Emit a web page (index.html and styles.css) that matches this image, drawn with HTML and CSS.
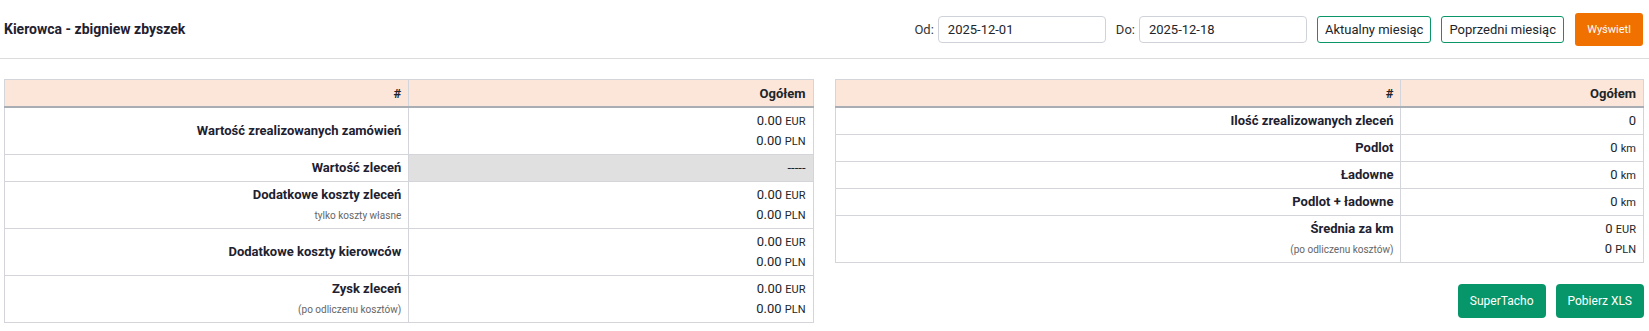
FILE: index.html
```html
<!DOCTYPE html>
<html>
<head>
    <title>Kierowca - raport</title>
    <link rel="stylesheet" href="styles.css">
</head>
<body>
    <div class="topbar">
        <h1 class="title">Kierowca - zbigniew zbyszek</h1>
        <div class="filters">
            <label class="field">Od: <input type="text" class="date" value="2025-12-01"></label>
            <label class="field">Do: <input type="text" class="date" value="2025-12-18"></label>
            <button class="btn btn-outline">Aktualny miesiąc</button>
            <button class="btn btn-outline">Poprzedni miesiąc</button>
            <button class="btn btn-orange">Wyświetl</button>
        </div>
    </div>

    <div class="content">
        <div class="col">
            <table class="stats">
                <thead>
                    <tr><th class="half">#</th><th>Ogółem</th></tr>
                </thead>
                <tbody>
                    <tr>
                        <td class="label">Wartość zrealizowanych zamówień</td>
                        <td>0.00 <small>EUR</small><br>0.00 <small>PLN</small></td>
                    </tr>
                    <tr>
                        <td class="label">Wartość zleceń</td>
                        <td class="empty">-----</td>
                    </tr>
                    <tr>
                        <td class="label">Dodatkowe koszty zleceń<br><span class="note">tylko koszty własne</span></td>
                        <td>0.00 <small>EUR</small><br>0.00 <small>PLN</small></td>
                    </tr>
                    <tr>
                        <td class="label">Dodatkowe koszty kierowców</td>
                        <td>0.00 <small>EUR</small><br>0.00 <small>PLN</small></td>
                    </tr>
                    <tr>
                        <td class="label">Zysk zleceń<br><span class="note">(po odliczenu kosztów)</span></td>
                        <td>0.00 <small>EUR</small><br>0.00 <small>PLN</small></td>
                    </tr>
                </tbody>
            </table>
        </div>

        <div class="col">
            <table class="stats">
                <thead>
                    <tr><th class="wide">#</th><th>Ogółem</th></tr>
                </thead>
                <tbody>
                    <tr>
                        <td class="label">Ilość zrealizowanych zleceń</td>
                        <td>0</td>
                    </tr>
                    <tr>
                        <td class="label">Podlot</td>
                        <td>0 <small>km</small></td>
                    </tr>
                    <tr>
                        <td class="label">Ładowne</td>
                        <td>0 <small>km</small></td>
                    </tr>
                    <tr>
                        <td class="label">Podlot + ładowne</td>
                        <td>0 <small>km</small></td>
                    </tr>
                    <tr>
                        <td class="label">Średnia za km<br><span class="note">(po odliczenu kosztów)</span></td>
                        <td>0 <small>EUR</small><br>0 <small>PLN</small></td>
                    </tr>
                </tbody>
            </table>

            <div class="actions">
                <button class="btn btn-green">SuperTacho</button>
                <button class="btn btn-green">Pobierz XLS</button>
            </div>
        </div>
    </div>
</body>
</html>
```

FILE: styles.css
```css
/* Raport kierowcy */
body {
    margin: 0;
    font-family: Roboto, "Liberation Sans", sans-serif;
    font-size: 13px;
    color: #212529;
    background: #fff;
}

.topbar {
    display: flex;
    justify-content: space-between;
    align-items: center;
    height: 58px;
    padding: 0 6px 0 4px;
    border-bottom: 1px solid #dcdcdc;
}

.title {
    margin: 0;
    font-size: 14px;
    font-weight: 700;
    color: #1e2130;
}

.filters {
    display: flex;
    align-items: center;
    gap: 10px;
}

.field {
    display: flex;
    align-items: center;
    gap: 4px;
    font-size: 13px;
    color: #333;
}

.date {
    width: 168px;
    height: 27px;
    box-sizing: border-box;
    padding: 0 9px;
    border: 1px solid #cfd2d8;
    border-radius: 4px;
    font-family: inherit;
    font-size: 13px;
    color: #212529;
}

.btn {
    font-family: inherit;
    cursor: pointer;
    border-radius: 3px;
    box-sizing: border-box;
}

.btn-outline {
    height: 27px;
    padding: 0 7px;
    background: #fff;
    border: 1px solid #0a9669;
    font-size: 13px;
    color: #212529;
}

.btn-orange {
    height: 33px;
    width: 68px;
    padding: 0;
    background: #f07000;
    border: none;
    color: #fff;
    font-size: 11px;
    margin-left: 1px;
}

.btn-green {
    height: 34px;
    padding: 0 12px;
    background: #079669;
    border: none;
    color: #fff;
    font-size: 12px;
    border-radius: 4px;
}

.content {
    display: grid;
    grid-template-columns: 1fr 1fr;
    gap: 21px;
    padding: 20px 5px 0 4px;
    align-items: start;
}

.stats {
    width: 100%;
    border-collapse: collapse;
    border: 1px solid #d3d5db;
}

.stats th {
    background: #fce6da;
    font-weight: 700;
    text-align: right;
    height: 26px;
    padding: 0 7px;
    border: 1px solid #d3d5db;
    border-bottom: 2px solid #a9adb4;
}

.stats th.half {
    width: 50%;
}

.stats th.wide {
    width: 70%;
}

.stats td {
    text-align: right;
    padding: 3px 7px;
    line-height: 20px;
    border: 1px solid #d3d5db;
    vertical-align: middle;
}

.stats td.label {
    font-weight: 700;
    color: #1e2130;
}

.stats td.empty {
    background: #e0e0e0;
}

.stats small {
    font-size: 11px;
    line-height: 1;
}

.note {
    font-size: 10px;
    font-weight: 400;
    line-height: 1;
    color: #666;
}

.actions {
    display: flex;
    justify-content: flex-end;
    gap: 10px;
    margin-top: 21px;
}
```
